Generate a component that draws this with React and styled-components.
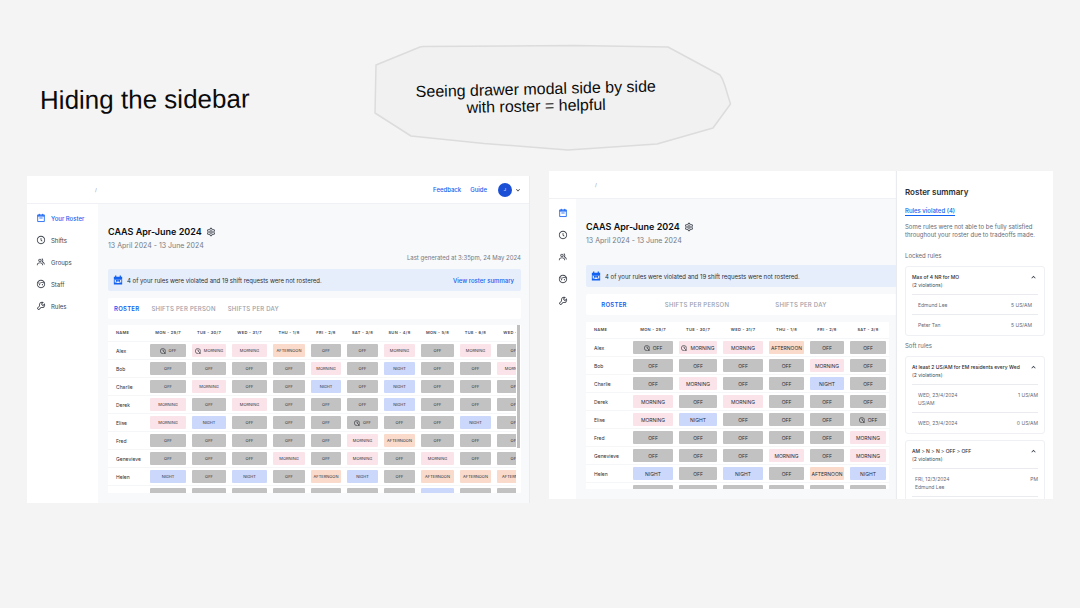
import React from "react";
import styled, { createGlobalStyle } from "styled-components";
import { BiCog, BiFace, BiGroup, BiTimeFive, BiWrench, BiChevronDown, BiChevronUp } from "react-icons/bi";

const GlobalStyle = createGlobalStyle`
  * { box-sizing: border-box; }
  body { margin: 0; background: #f4f4f4; font-family: Inter, "Liberation Sans", sans-serif; color: #2c2e34; }
  h1, h2, h3, p { margin: 0; }
  button { border: 0; padding: 0; background: none; font: inherit; color: inherit; cursor: pointer; }
  a { color: inherit; text-decoration: none; }
  svg { display: block; flex: none; }
`;

const Board = styled.main`
  padding: 44px 0 24px;
`;

const Intro = styled.header`
  display: grid;
  grid-template-columns: 374fr 706fr;
  align-items: center;
`;

const BoardTitle = styled.h1`
  padding: 2px 0 0 40px;
  font: 400 26px/32px "Liberation Sans", Arial, sans-serif;
  color: #0b0b0b;
  white-space: nowrap;
  transform: rotate(-0.4deg);
`;

const Bubble = styled.div`
  display: grid;
  align-items: center;
  width: 358px;
  > * { grid-area: 1 / 1; }
`;

const BubbleText = styled.p`
  padding: 0 34px 2px 0;
  font: 400 16px/17px "Liberation Sans", Arial, sans-serif;
  text-align: center;
  color: #0b0b0b;
  transform: rotate(-1.3deg);
`;

const Screens = styled.div`
  display: grid;
  grid-template-columns: 502fr 504fr;
  gap: 20px;
  align-items: start;
  margin-top: 19px;
  padding: 0 27px;
`;

const Screen = styled.section`
  display: flex;
  min-width: 0;
  margin-top: ${(p) => (p.$lowered ? 5 : 0)}px;
  background: #f7f9fb;
  box-shadow: ${(p) => (p.$lowered ? "1px 0 0 #ebeded" : "none")};
`;

const AppShell = styled.div`
  flex: 1;
  min-width: 0;
  overflow: hidden;
`;

const TopBar = styled.div`
  display: flex;
  align-items: center;
  height: 28px;
  padding: 0 7px 0 ${(p) => (p.$compact ? 46 : 68)}px;
  background: #fff;
  border-bottom: 1px solid #f0f1f4;
  font-size: 6px;
  line-height: 8px;
`;

const Slash = styled.span`
  flex: 1;
  font-size: 5px;
  color: #8b8f99;
`;

const TopLink = styled.a`
  margin-right: ${(p) => (p.$last ? 11 : 9)}px;
  font-weight: 500;
  color: #1361f0;
`;

const Account = styled.button`
  display: flex;
  align-items: center;
  gap: 2px;
`;

const Avatar = styled.span`
  width: 14px;
  height: 14px;
  border-radius: 50%;
  background: #1b4fd6;
  color: #fff;
  font-size: 4px;
  line-height: 14px;
  text-align: center;
`;

const Body = styled.div`
  display: flex;
`;

const Sidebar = styled.nav`
  flex: none;
  width: ${(p) => (p.$compact ? 27 : 71)}px;
  padding: 3px 0 0 9px;
  background: #fff;
`;

const NavLink = styled.a`
  display: flex;
  align-items: center;
  gap: 5px;
  height: 22px;
  font-size: 6px;
  font-weight: ${(p) => (p.$active ? 500 : 400)};
  color: ${(p) => (p.$active ? "#1361f0" : "#40454f")};
`;

const Content = styled.div`
  flex: 1;
  min-width: 0;
  padding: 21px ${(p) => (p.$compact ? 0 : 8)}px 10px 10px;
`;

const Heading = styled.div`
  min-height: ${(p) => (p.$compact ? 45 : 44)}px;
`;

const TitleRow = styled.div`
  display: flex;
  align-items: center;
  gap: 4px;
  height: 14px;
`;

const RosterTitle = styled.h2`
  font-size: 9px;
  line-height: 14px;
  font-weight: 600;
  color: #0d0f13;
  white-space: nowrap;
`;

const IconButton = styled.button`
  color: #40454f;
`;

const Dates = styled.p`
  margin-top: 2px;
  font-size: ${(p) => (p.$end ? 6 : 7)}px;
  line-height: 10px;
  text-align: ${(p) => (p.$end ? "right" : "left")};
  color: #747985;
`;

const Banner = styled.div`
  display: flex;
  align-items: center;
  height: 22px;
  padding: 0 7px 0 5px;
  border-radius: 2px;
  background: #e7eefb;
  font-size: 6px;
  white-space: nowrap;
`;

const BannerText = styled.span`
  flex: 1;
  margin-left: 4px;
`;

const BannerLink = styled.a`
  font-weight: 500;
  color: #1361f0;
`;

const Tabs = styled.div`
  display: ${(p) => (p.$compact ? "grid" : "flex")};
  grid-template-columns: 56px 110px 98px;
  gap: ${(p) => (p.$compact ? 0 : 12)}px;
  height: 21px;
  margin: 7px 0 ${(p) => (p.$compact ? 7 : 6)}px;
  padding: 0 ${(p) => (p.$compact ? 0 : 6)}px;
  border-radius: 2px;
  background: #fff;
`;

const Tab = styled.button`
  font-size: 6px;
  font-weight: ${(p) => (p.$active ? 600 : 500)};
  letter-spacing: 0.04em;
  color: ${(p) => (p.$active ? "#1361f0" : "#9a9eaa")};
`;

const TableBox = styled.div`
  display: flex;
  height: ${(p) => (p.$compact ? 167 : 168)}px;
  margin-right: ${(p) => (p.$compact ? 8 : 0)}px;
  background: #fff;
`;

const TableClip = styled.div`
  flex: 1;
  min-width: 0;
  overflow: hidden;
`;

const ScrollThumb = styled.div`
  width: 3px;
  height: 123px;
  margin: 0 1px;
  background: #bfbfbf;
`;

const RosterTable = styled.table`
  width: 100%;
  min-width: ${(p) => p.$min}px;
  table-layout: fixed;
  border-collapse: separate;
  border-spacing: 0;
`;

const ColumnHead = styled.th`
  height: 17px;
  padding: ${(p) => (p.$name ? "0 0 0 8px" : "0")};
  border-bottom: 1px solid #f5f6f8;
  font-size: 4px;
  line-height: 6px;
  font-weight: 600;
  text-align: ${(p) => (p.$name ? "left" : "center")};
  letter-spacing: 0.08em;
  white-space: nowrap;
  color: #40454f;
`;

const NameCell = styled.th`
  height: 18px;
  padding: 0 0 0 8px;
  border-bottom: 1px solid #f5f6f8;
  font-size: 5px;
  line-height: 8px;
  font-weight: 400;
  text-align: left;
`;

const ShiftCell = styled.td`
  height: 18px;
  padding: 0 3px;
  border-bottom: 1px solid #f5f6f8;
`;

const shiftColors = { OFF: "#c2c2c2", MORNING: "#fae4ea", AFTERNOON: "#f9dacb", NIGHT: "#ccd8fb" };

const Chip = styled.div`
  display: flex;
  align-items: center;
  justify-content: center;
  gap: 3px;
  height: 13px;
  border-radius: 1px;
  background: ${(p) => shiftColors[p.$shift]};
  font-size: ${(p) => (p.$compact ? 5 : 4)}px;
  line-height: 8px;
  color: #2c2e34;
`;

const Drawer = styled.aside`
  flex: none;
  width: 156px;
  height: 328px;
  overflow: hidden;
  padding: 15px 8px 0;
  background: #fff;
  box-shadow: -1px 0 1px #e9ebef;
  position: relative;
  font-size: 6px;
  line-height: 8px;
  color: #666b77;
`;

const DrawerTitle = styled.h2`
  font-size: 8px;
  line-height: 12px;
  font-weight: 600;
  color: #2c2e34;
`;

const DrawerTab = styled.button`
  margin: 8px 0 7px;
  border-bottom: 1px solid #1361f0;
  font-weight: 500;
  line-height: 9px;
  color: #1361f0;
`;

const GroupLabel = styled.h3`
  margin: ${(p) => (p.$first ? 13 : 6)}px 0 6px;
  font-size: 6px;
  line-height: 8px;
  font-weight: 400;
`;

const Card = styled.article`
  width: 140px;
  margin-bottom: 6px;
  padding: 6px 6px 1px;
  border: 1px solid #eef0f3;
  border-radius: 3px;
  font-size: 5px;
`;

const CardToggle = styled.button`
  display: flex;
  align-items: flex-start;
  justify-content: space-between;
  width: 100%;
  margin-bottom: 5px;
  text-align: left;
  color: #40454f;
`;

const CardName = styled.span`
  display: block;
  font-weight: 500;
  white-space: nowrap;
  color: #2c2e34;
`;

const Violation = styled.div`
  display: flex;
  justify-content: space-between;
  padding: 6px ${(p) => p.$end}px 5px ${(p) => p.$start}px;
  border-top: 1px solid #e9ebee;
  white-space: pre-line;
`;

function CalendarIcon() {
  return (
    <svg width="10" height="10" viewBox="0 0 24 24" fill="none" stroke="currentColor" strokeWidth="2">
      <path d="M4 4.500h16v16H4z M8 2v4 M16 2v4" />
      <path d="M4 7h16" strokeWidth="3" />
      <path d="M8 12h8" />
    </svg>
  );
}

function BannerIcon() {
  return (
    <svg width="10" height="10" viewBox="0 0 24 24">
      <path d="M5 1h3v3h8V1h3v3h3v6H2V4h3z M2 11h20v12H2z" fill="#1361f0" />
      <path d="M4 12h3v4h4v-3h2v3h4v-4h3v6h-5v1H9v-1H4z" fill="#e7eefb" />
    </svg>
  );
}

function RequestIcon() {
  return (
    <svg width="6" height="6" viewBox="0 0 24 24" fill="none" stroke="currentColor" strokeWidth="2.400">
      <path d="M21 15A10 10 0 1 0 13 22" />
      <path d="M12 6v6h4 M13 13l8 8 M21 15v7h-7" />
    </svg>
  );
}

const navItems = [
  ["Your Roster", CalendarIcon],
  ["Shifts", BiTimeFive],
  ["Groups", BiGroup],
  ["Staff", BiFace],
  ["Rules", BiWrench],
];

const days = [
  "MON - 29/7", "TUE - 30/7", "WED - 31/7", "THU - 1/8", "FRI - 2/8",
  "SAT - 3/8", "SUN - 4/8", "MON - 5/8", "TUE - 6/8", "WED - 7/8",
];

const shiftNames = { O: "OFF", M: "MORNING", A: "AFTERNOON", N: "NIGHT" };

const staff = [
  ["Alex", "OMMAOOMOMO", [0, 1]],
  ["Bob", "OOOOMONOOM", []],
  ["Charlie", "OMOONONOOO", []],
  ["Derek", "MOMOOONOOO", []],
  ["Elise", "MNOOOOOONO", [5]],
  ["Fred", "OOOOOMAOOO", []],
  ["Genevieve", "OOOMOMOMOO", []],
  ["Helen", "NONOANOAAA", []],
  ["Ivan", "OOOOOOONOO", []],
];

const wideColumns = [39, 42, 40, 41, 38, 36, 37, 37, 39, 37, 41];
const compactColumns = [44, 46, 44, 46, 41, 40, 42];

function Roster({ compact }) {
  const columns = compact ? compactColumns : wideColumns;
  const dayCount = columns.length - 1;
  return (
    <TableBox $compact={compact}>
      <TableClip>
        <RosterTable $min={columns.reduce((a, b) => a + b, 0)}>
          <colgroup>
            {columns.map((w, i) => <col key={i} width={w} />)}
          </colgroup>
          <thead>
            <tr>
              <ColumnHead $name scope="col">NAME</ColumnHead>
              {days.slice(0, dayCount).map((d) => <ColumnHead key={d} scope="col">{d}</ColumnHead>)}
            </tr>
          </thead>
          <tbody>
            {staff.map(([name, shifts, requested]) => (
              <tr key={name}>
                <NameCell scope="row">{name}</NameCell>
                {shifts.slice(0, dayCount).split("").map((s, i) => (
                  <ShiftCell key={i}>
                    <Chip $shift={shiftNames[s]} $compact={compact}>
                      {requested.includes(i) && <RequestIcon />}
                      {shiftNames[s]}
                    </Chip>
                  </ShiftCell>
                ))}
              </tr>
            ))}
          </tbody>
        </RosterTable>
      </TableClip>
      {!compact && <ScrollThumb />}
    </TableBox>
  );
}

function RosterApp({ compact }) {
  return (
    <AppShell>
      <TopBar $compact={compact}>
        <Slash>/</Slash>
        {!compact && (
          <>
            <TopLink href="#feedback">Feedback</TopLink>
            <TopLink href="#guide" $last>Guide</TopLink>
            <Account aria-label="Account menu">
              <Avatar>J</Avatar>
              <BiChevronDown size={8} />
            </Account>
          </>
        )}
      </TopBar>
      <Body>
        <Sidebar $compact={compact} aria-label="Main">
          {navItems.map(([label, Icon], i) => (
            <NavLink key={label} href="#nav" $active={i === 0} aria-label={label}>
              <Icon size={10} />
              {!compact && label}
            </NavLink>
          ))}
        </Sidebar>
        <Content $compact={compact}>
          <Heading $compact={compact}>
            <TitleRow>
              <RosterTitle>CAAS Apr-June 2024</RosterTitle>
              <IconButton aria-label="Roster settings"><BiCog size={10} /></IconButton>
            </TitleRow>
            <Dates>13 April 2024 - 13 June 2024</Dates>
            {!compact && <Dates $end>Last generated at 3:35pm, 24 May 2024</Dates>}
          </Heading>
          <Banner>
            <BannerIcon />
            <BannerText>4 of your rules were violated and 19 shift requests were not rostered.</BannerText>
            {!compact && <BannerLink href="#summary">View roster summary</BannerLink>}
          </Banner>
          <Tabs $compact={compact} role="tablist">
            <Tab role="tab" aria-selected="true" $active>ROSTER</Tab>
            <Tab role="tab" aria-selected="false">SHIFTS PER PERSON</Tab>
            <Tab role="tab" aria-selected="false">SHIFTS PER DAY</Tab>
          </Tabs>
          <Roster compact={compact} />
        </Content>
      </Body>
    </AppShell>
  );
}

function RuleCard({ name, rows, start = 6, end = 0 }) {
  return (
    <Card>
      <CardToggle aria-expanded="true">
        <span>
          <CardName>{name}</CardName>
          (2 violations)
        </span>
        <BiChevronUp size={9} />
      </CardToggle>
      {rows.map(([who, value]) => (
        <Violation key={who} $start={start} $end={end}>
          <span>{who}</span>
          <span>{value}</span>
        </Violation>
      ))}
    </Card>
  );
}

export default function App() {
  return (
    <>
      <GlobalStyle />
      <Board>
        <Intro>
          <BoardTitle>Hiding the sidebar</BoardTitle>
          <Bubble>
            <svg width="358" height="108" viewBox="0 0 358 108" aria-hidden="true">
              <path
                d="M49 2.500 L200 1.500 L294 3 L346 31 Q349 35 351 42 L356.500 60 L339 84 L283 100 L194 106 L110 99.500 L37 92 L1 69 L2 21 L46 3 Z"
                fill="#f1f1f1"
                stroke="#dcdcdc"
                strokeWidth="1.500"
                strokeLinejoin="round"
              />
            </svg>
            <BubbleText>
              Seeing drawer modal side by side
              <br />
              with roster = helpful
            </BubbleText>
          </Bubble>
        </Intro>
        <Screens>
          <Screen $lowered>
            <RosterApp />
          </Screen>
          <Screen>
            <RosterApp compact />
            <Drawer>
              <DrawerTitle>Roster summary</DrawerTitle>
              <DrawerTab>Rules violated (4)</DrawerTab>
              <p>
                Some rules were not able to be fully satisfied
                <br />
                throughout your roster due to tradeoffs made.
              </p>
              <GroupLabel $first>Locked rules</GroupLabel>
              <RuleCard
                name="Max of 4 NR for MO"
                end={6}
                rows={[["Edmund Lee", "5 US/AM"], ["Peter Tan", "5 US/AM"]]}
              />
              <GroupLabel>Soft rules</GroupLabel>
              <RuleCard
                name="At least 2 US/AM for EM residents every Wed"
                rows={[["WED, 23/4/2024\nUS/AM", "1 US/AM"], ["WED, 23/4/2024", "0 US/AM"]]}
              />
              <RuleCard
                name="AM > N > N > OFF > OFF"
                start={3}
                rows={[["FRI, 12/3/2024\nEdmund Lee", "PM"], ["SAT, 13/3/2024", "PM"]]}
              />
            </Drawer>
          </Screen>
        </Screens>
      </Board>
    </>
  );
}
